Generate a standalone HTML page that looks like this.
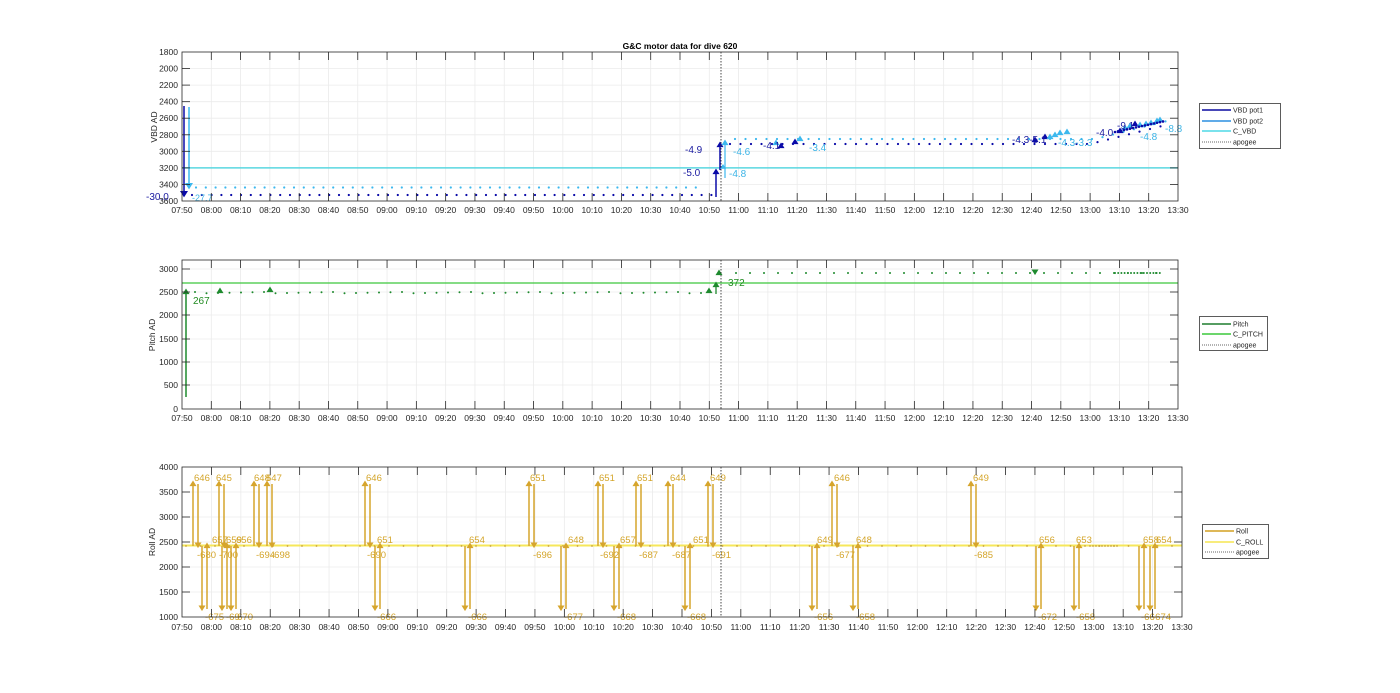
<!DOCTYPE html>
<html><head><meta charset="utf-8"><style>
html,body{margin:0;padding:0;background:#fff;width:1400px;height:693px;overflow:hidden}
svg{font-family:"Liberation Sans",Arial,sans-serif}
.t{font-size:8.5px;fill:#262626}
.xl text{text-anchor:middle}
.yl text{text-anchor:end}
</style></head><body>
<svg id="s" width="1400" height="693" viewBox="0 0 1400 693" xmlns="http://www.w3.org/2000/svg">
<rect width="1400" height="693" fill="#fff"/>
<g id="grid"></g>
<g id="data"></g>
<text x="680" y="49" text-anchor="middle" font-size="8.5" font-weight="bold" fill="#000">G&amp;C motor data for dive 620</text>

<g class="t yl">
<text x="178" y="55">1800</text><text x="178" y="71.6">2000</text><text x="178" y="88.1">2200</text><text x="178" y="104.7">2400</text><text x="178" y="121.2">2600</text><text x="178" y="137.8">2800</text><text x="178" y="154.3">3000</text><text x="178" y="170.9">3200</text><text x="178" y="187.4">3400</text><text x="178" y="204">3600</text>
</g>
<text transform="translate(157,127) rotate(-90)" text-anchor="middle" class="t">VBD AD</text>
<g class="t yl">
<text x="178" y="272">3000</text><text x="178" y="295">2500</text><text x="178" y="318">2000</text><text x="178" y="342">1500</text><text x="178" y="365">1000</text><text x="178" y="388">500</text><text x="178" y="412">0</text>
</g>
<text transform="translate(155,335) rotate(-90)" text-anchor="middle" class="t">Pitch AD</text>
<g class="t yl">
<text x="178" y="470">4000</text><text x="178" y="495">3500</text><text x="178" y="520">3000</text><text x="178" y="545">2500</text><text x="178" y="570">2000</text><text x="178" y="595">1500</text><text x="178" y="620">1000</text>
</g>
<text transform="translate(155,542) rotate(-90)" text-anchor="middle" class="t">Roll AD</text>

<g class="t xl" transform="translate(182,213)">
<text x="0">07:50</text><text x="29.3">08:00</text><text x="58.6">08:10</text><text x="87.9">08:20</text><text x="117.2">08:30</text><text x="146.5">08:40</text><text x="175.8">08:50</text><text x="205">09:00</text><text x="234.3">09:10</text><text x="263.6">09:20</text><text x="292.9">09:30</text><text x="322.2">09:40</text><text x="351.5">09:50</text><text x="380.8">10:00</text><text x="410.1">10:10</text><text x="439.4">10:20</text><text x="468.7">10:30</text><text x="498">10:40</text><text x="527.3">10:50</text><text x="556.6">11:00</text><text x="585.9">11:10</text><text x="615.2">11:20</text><text x="644.5">11:30</text><text x="673.8">11:40</text><text x="703">11:50</text><text x="732.3">12:00</text><text x="761.6">12:10</text><text x="790.9">12:20</text><text x="820.2">12:30</text><text x="849.5">12:40</text><text x="878.8">12:50</text><text x="908.1">13:00</text><text x="937.4">13:10</text><text x="966.7">13:20</text><text x="996">13:30</text>
</g>
<g class="t xl" transform="translate(182,421)">
<text x="0">07:50</text><text x="29.3">08:00</text><text x="58.6">08:10</text><text x="87.9">08:20</text><text x="117.2">08:30</text><text x="146.5">08:40</text><text x="175.8">08:50</text><text x="205">09:00</text><text x="234.3">09:10</text><text x="263.6">09:20</text><text x="292.9">09:30</text><text x="322.2">09:40</text><text x="351.5">09:50</text><text x="380.8">10:00</text><text x="410.1">10:10</text><text x="439.4">10:20</text><text x="468.7">10:30</text><text x="498">10:40</text><text x="527.3">10:50</text><text x="556.6">11:00</text><text x="585.9">11:10</text><text x="615.2">11:20</text><text x="644.5">11:30</text><text x="673.8">11:40</text><text x="703">11:50</text><text x="732.3">12:00</text><text x="761.6">12:10</text><text x="790.9">12:20</text><text x="820.2">12:30</text><text x="849.5">12:40</text><text x="878.8">12:50</text><text x="908.1">13:00</text><text x="937.4">13:10</text><text x="966.7">13:20</text><text x="996">13:30</text>
</g>
<g class="t xl" transform="translate(182,630)">
<text x="0">07:50</text><text x="29.4">08:00</text><text x="58.8">08:10</text><text x="88.2">08:20</text><text x="117.6">08:30</text><text x="147.1">08:40</text><text x="176.5">08:50</text><text x="205.9">09:00</text><text x="235.3">09:10</text><text x="264.7">09:20</text><text x="294.1">09:30</text><text x="323.5">09:40</text><text x="352.9">09:50</text><text x="382.4">10:00</text><text x="411.8">10:10</text><text x="441.2">10:20</text><text x="470.6">10:30</text><text x="500">10:40</text><text x="529.4">10:50</text><text x="558.8">11:00</text><text x="588.2">11:10</text><text x="617.6">11:20</text><text x="647.1">11:30</text><text x="676.5">11:40</text><text x="705.9">11:50</text><text x="735.3">12:00</text><text x="764.7">12:10</text><text x="794.1">12:20</text><text x="823.5">12:30</text><text x="852.9">12:40</text><text x="882.4">12:50</text><text x="911.8">13:00</text><text x="941.2">13:10</text><text x="970.6">13:20</text><text x="1000">13:30</text>
</g>

<g font-size="10">
<text x="146" y="200" fill="#1a1aa0">-30.0</text>
<text x="192" y="201" fill="#3cb4e6" font-size="9">-27.7</text>
<text x="685" y="153" fill="#1a1aa0">-4.9</text>
<text x="683" y="176" fill="#1a1aa0">-5.0</text>
<text x="733" y="155" fill="#3cb4e6">-4.6</text>
<text x="729" y="177" fill="#3cb4e6">-4.8</text>
<text x="763" y="149" fill="#1a1aa0">-4.1</text>
<text x="809" y="151" fill="#3cb4e6">-3.4</text>
<text x="1012" y="143" fill="#1a1aa0">-4.3-5.1</text>
<text x="1058" y="146" fill="#3cb4e6">-4.3-3.3</text>
<text x="1096" y="136" fill="#1a1aa0">-4.0</text>
<text x="1117" y="129" fill="#1a1aa0">-9.1</text>
<text x="1140" y="140" fill="#3cb4e6">-4.8</text>
<text x="1165" y="132" fill="#3cb4e6">-8.8</text>
<text x="193" y="304" fill="#228b22">267</text>
<text x="728" y="286" fill="#228b22">372</text>
</g>
<g font-size="9.5" fill="#d4a52a">
<text x="194" y="481">646</text><text x="216" y="481">645</text><text x="254" y="481">648</text><text x="266" y="481">647</text><text x="366" y="481">646</text><text x="530" y="481">651</text><text x="599" y="481">651</text><text x="637" y="481">651</text><text x="670" y="481">644</text><text x="710" y="481">649</text><text x="834" y="481">646</text><text x="973" y="481">649</text>
<text x="197" y="558">-680</text><text x="219" y="558">-700</text><text x="256" y="558">-694</text><text x="271" y="558">-698</text><text x="367" y="558">-690</text><text x="533" y="558">-696</text><text x="600" y="558">-692</text><text x="639" y="558">-687</text><text x="672" y="558">-687</text><text x="712" y="558">-691</text><text x="836" y="558">-677</text><text x="974" y="558">-685</text>
<text x="212" y="543">657</text><text x="226" y="543">659</text><text x="236" y="543">656</text><text x="377" y="543">651</text><text x="469" y="543">654</text><text x="568" y="543">648</text><text x="620" y="543">657</text><text x="693" y="543">651</text><text x="817" y="543">649</text><text x="856" y="543">648</text><text x="1039" y="543">656</text><text x="1076" y="543">653</text><text x="1143" y="543">658</text><text x="1156" y="543">654</text>
<text x="205" y="620">-675</text><text x="226" y="620">-69</text><text x="234" y="620">-670</text><text x="377" y="620">-666</text><text x="468" y="620">-666</text><text x="564" y="620">-677</text><text x="617" y="620">-668</text><text x="687" y="620">-668</text><text x="814" y="620">-656</text><text x="856" y="620">-658</text><text x="1038" y="620">-672</text><text x="1076" y="620">-658</text><text x="1141" y="620">-66</text><text x="1152" y="620">-674</text>
</g>

<g font-size="7" fill="#262626">
<rect x="1199.5" y="103.5" width="81" height="45" fill="#fff" stroke="#333" stroke-width="0.8"/>
<line x1="1202" y1="110" x2="1231" y2="110" stroke="#0a0aa0" stroke-width="1.6"/><text x="1233" y="112.5">VBD pot1</text>
<line x1="1202" y1="121" x2="1231" y2="121" stroke="#2c8fe0" stroke-width="1.6"/><text x="1233" y="123.5">VBD pot2</text>
<line x1="1202" y1="131" x2="1231" y2="131" stroke="#4fd8e6" stroke-width="1.6"/><text x="1233" y="133.5">C_VBD</text>
<line x1="1202" y1="142" x2="1231" y2="142" stroke="#333" stroke-width="0.8" stroke-dasharray="1,1"/><text x="1233" y="144.5">apogee</text>
<rect x="1199.5" y="316.5" width="68" height="34" fill="#fff" stroke="#333" stroke-width="0.8"/>
<line x1="1202" y1="324" x2="1231" y2="324" stroke="#1e7d2e" stroke-width="1.6"/><text x="1233" y="326.5">Pitch</text>
<line x1="1202" y1="334" x2="1231" y2="334" stroke="#3cc83c" stroke-width="1.6"/><text x="1233" y="336.5">C_PITCH</text>
<line x1="1202" y1="345" x2="1231" y2="345" stroke="#333" stroke-width="0.8" stroke-dasharray="1,1"/><text x="1233" y="347.5">apogee</text>
<rect x="1202.5" y="524.5" width="66" height="34" fill="#fff" stroke="#333" stroke-width="0.8"/>
<line x1="1205" y1="531" x2="1234" y2="531" stroke="#d4a020" stroke-width="1.6"/><text x="1236" y="533.5">Roll</text>
<line x1="1205" y1="542" x2="1234" y2="542" stroke="#f5e650" stroke-width="1.6"/><text x="1236" y="544.5">C_ROLL</text>
<line x1="1205" y1="552" x2="1234" y2="552" stroke="#333" stroke-width="0.8" stroke-dasharray="1,1"/><text x="1236" y="554.5">apogee</text>
</g>
<g id="axes"></g>
</svg>
<script>
var NS="http://www.w3.org/2000/svg";
function el(p,n,a){var e=document.createElementNS(NS,n);for(var k in a)e.setAttribute(k,a[k]);document.getElementById(p).appendChild(e);return e;}
var P=[{l:182,r:1178,t:52,b:201,ys:[68.6,85.1,101.7,118.2,134.8,151.3,167.9,184.4]},
{l:182,r:1178,t:260,b:409,ys:[269,292,315,339,362,385]},
{l:182,r:1182,t:467,b:617,ys:[492,517,542,567,592]}];
P.forEach(function(p,i){
 var n=34,w=(p.r-p.l)/n;
 for(var k=1;k<n;k++){var x=p.l+k*w;el('grid','line',{x1:x,x2:x,y1:p.t,y2:p.b,stroke:'#ebebeb','stroke-width':0.8});
  el('axes','line',{x1:x,x2:x,y1:p.b,y2:p.b-8,stroke:'#262626','stroke-width':0.8});
  el('axes','line',{x1:x,x2:x,y1:p.t,y2:p.t+8,stroke:'#262626','stroke-width':0.8});}
 p.ys.forEach(function(y){el('grid','line',{x1:p.l,x2:p.r,y1:y,y2:y,stroke:'#ebebeb','stroke-width':0.8});
  el('axes','line',{x1:p.l,x2:p.l+8,y1:y,y2:y,stroke:'#262626','stroke-width':0.8});
  el('axes','line',{x1:p.r,x2:p.r-8,y1:y,y2:y,stroke:'#262626','stroke-width':0.8});});
 el('axes','rect',{x:p.l,y:p.t,width:p.r-p.l,height:p.b-p.t,fill:'none',stroke:'#262626','stroke-width':0.8});
 el('axes','line',{x1:721,x2:721,y1:p.t,y2:p.b,stroke:'#333','stroke-width':0.9,'stroke-dasharray':'1.5,1.5'});
});
function dot(x,y,c,r){el('data','circle',{cx:x,cy:y,r:r||1.1,fill:c});}
function tri(x,y,c,s,dn){s=s||4;var d=dn?('M'+(x-s)+','+(y-s)+' L'+(x+s)+','+(y-s)+' L'+x+','+(y+s*0.6)+'Z'):('M'+(x-s)+','+(y+s*0.6)+' L'+(x+s)+','+(y+s*0.6)+' L'+x+','+(y-s)+'Z');el('data','path',{d:d,fill:c});}
var DB='#0a0aa8',LB='#3cb8ee',CY='#5ad7e0';
el('data','line',{x1:182,x2:1178,y1:167.9,y2:167.9,stroke:CY,'stroke-width':1.5});
el('data','line',{x1:184,x2:184,y1:106,y2:195,stroke:DB,'stroke-width':1.5});
el('data','line',{x1:189,x2:189,y1:107,y2:187,stroke:LB,'stroke-width':1.5});
tri(184,195,DB,4,true);tri(189,187,LB,4,true);
for(var x=192;x<712;x+=9.8){dot(x,195,DB);if(x<700)dot(x+4,187.5,LB);}
for(var x=730;x<1165;x+=10.5){var y=144-(x>1090?(x-1090)*0.25:0);dot(x,y,DB);dot(x+5,y-5,LB);}
[[716,197,172],[720,170,145]].forEach(function(a){el('data','line',{x1:a[0],x2:a[0],y1:a[1],y2:a[2],stroke:DB,'stroke-width':1.5});tri(a[0],a[2],DB,3.5);});
el('data','line',{x1:725,x2:725,y1:178,y2:142,stroke:LB,'stroke-width':1.2});tri(725,143,LB,3.5);tri(723,167,LB,3);
[[781,146,DB],[795,142,DB],[776,143,LB],[800,139,LB],[1035,140,DB],[1045,137,DB],[1050,137,LB],[1055,135,LB],[1060,133,LB],[1067,132,LB],[1120,131,DB],[1125,128,LB],[1130,126,LB],[1135,124,DB],[1140,125,LB],[1146,124,LB],[1151,123,LB],[1157,121,LB],[1160,120,LB]].forEach(function(a){tri(a[0],a[1],a[2],3.5);});
for(var x=1115;x<1165;x+=3){dot(x,132-(x-1115)*0.22,DB,1.3);}
var G='#1e8a2e',LG='#3cc83c';
el('data','line',{x1:182,x2:1178,y1:283,y2:283,stroke:LG,'stroke-width':1.2});
el('data','line',{x1:186,x2:186,y1:293,y2:397,stroke:G,'stroke-width':1.5});tri(186,292,G,3.5);
for(var x=195;x<706;x+=11.5){dot(x,292+((x*7)%3)*0.5,G,1);}
for(var x=736;x<1160;x+=14){dot(x,273,G,1);}
for(var x=1115;x<1160;x+=3.2){dot(x,273,G,1);}
tri(220,291,G,3.5);tri(270,290,G,3.5);tri(709,291,G,3.5);tri(716,285,G,3.5);tri(719,273,G,3.5);tri(1035,273,G,3.5,true);
el('data','line',{x1:716,x2:716,y1:294,y2:284,stroke:G,'stroke-width':1.3});
var O='#d6a52c';
el('data','line',{x1:182,x2:1182,y1:545.5,y2:545.5,stroke:'#f6e75a','stroke-width':2});
for(var x=186;x<1180;x+=14.5){dot(x,546,'#c8a23a',0.9);}
for(var x=1090;x<1120;x+=3){dot(x,546,'#c8a23a',0.9);}
function up(x){el('data','line',{x1:x,x2:x,y1:546,y2:484,stroke:O,'stroke-width':1.5});tri(x,484,O,3.5);
 el('data','line',{x1:x+5,x2:x+5,y1:484,y2:546,stroke:O,'stroke-width':1.5});tri(x+5,546,O,3.5,true);}
function dn(x){el('data','line',{x1:x,x2:x,y1:546,y2:609,stroke:O,'stroke-width':1.5});tri(x,609,O,3.5,true);
 el('data','line',{x1:x+5,x2:x+5,y1:609,y2:546,stroke:O,'stroke-width':1.5});tri(x+5,546,O,3.5);}
[193,219,254,267,365,529,598,636,668,708,832,971].forEach(up);
[202,222,231,375,465,561,614,685,812,853,1036,1074,1139,1150].forEach(dn);
</script>
</body></html>
